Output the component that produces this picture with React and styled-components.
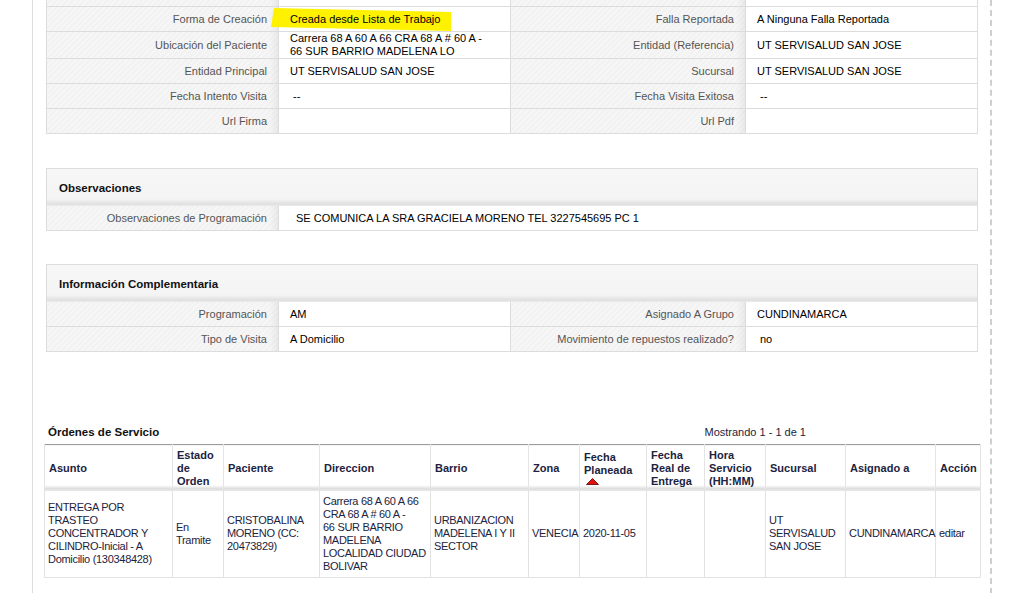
import React from 'react';
import styled, { createGlobalStyle } from 'styled-components';

const GlobalStyle = createGlobalStyle`
  html, body {
    margin: 0;
    padding: 0;
    background: #fff;
    font-family: "Liberation Sans", Arial, sans-serif;
    font-size: 11px;
  }
`;

const Page = styled.div`
  margin-left: 32px;
  width: 960px;
  min-height: 593px;
  box-sizing: border-box;
  border-left: 1px solid #dcdcdc;
  border-right: 2px dashed #cfcfcf;
  padding: 0 12px 16px 13px;
`;

const Grid = styled.div`
  display: grid;
  grid-template-columns: ${({ cols }) => cols};
  border-left: 1px solid #dcdcdc;
  border-right: 1px solid #dcdcdc;
  border-top: ${({ open }) => (open ? 'none' : '1px solid #dcdcdc')};
`;

const Label = styled.div`
  box-sizing: border-box;
  min-height: ${({ short }) => (short ? '7px' : '25px')};
  display: flex;
  align-items: center;
  justify-content: flex-end;
  padding: 0 11px;
  color: #555;
  line-height: 13px;
  border-right: 1px solid #dcdcdc;
  border-bottom: 1px solid #dcdcdc;
  background:
    linear-gradient(to right, rgba(0, 0, 0, 0) calc(100% - 9px), rgba(0, 0, 0, 0.05)),
    repeating-linear-gradient(135deg, #f6f6f6 0 2px, #f2f2f2 2px 4px);
`;

const Value = styled.div`
  position: relative;
  box-sizing: border-box;
  min-height: ${({ short }) => (short ? '7px' : '25px')};
  display: flex;
  align-items: center;
  padding: 0 11px 0 ${({ pad }) => pad || 11}px;
  color: #000;
  line-height: 13px;
  border-right: ${({ last }) => (last ? 'none' : '1px solid #dcdcdc')};
  border-bottom: 1px solid #dcdcdc;
  background: #fff;
`;

const Highlight = styled.span`
  position: absolute;
  left: -8px;
  top: 0;
  width: 180px;
  height: 25px;
  background: #fff200;
  clip-path: polygon(3px 1px, 100% 5px, 100% 24px, 0 20px);
`;

const HighText = styled.span`
  position: relative;
`;

const Panel = styled.section`
  margin-top: ${({ gap }) => gap || 34}px;
  border: 1px solid #dcdcdc;
  border-bottom: none;
`;

const PanelHeader = styled.div`
  height: 37px;
  display: flex;
  align-items: center;
  padding: 0 12px;
  font-weight: bold;
  font-size: 11.5px;
  color: #111;
  background: linear-gradient(to bottom, #f7f7f7 0, #f4f4f4 calc(100% - 7px), #e0e0e0 calc(100% - 2px), #eaeaea 100%);
`;

const PanelGrid = styled(Grid)`
  border-left: none;
  border-right: none;
  border-top: none;
`;

const OrdersHead = styled.div`
  margin-top: 68px;
  display: flex;
  align-items: center;
  height: 24px;
  padding: 0 2px;
`;

const OrdersTitle = styled.div`
  flex: 1;
  font-weight: bold;
  font-size: 11.5px;
  color: #111;
`;

const Showing = styled.div`
  color: #1c2340;
  padding-right: 170px;
`;

const Table = styled.table`
  width: 936px;
  margin: 0 -2px;
  border-collapse: collapse;
  table-layout: fixed;
  border-top: 1px solid #9c9c9c;
  color: #1c2340;
`;

const Th = styled.th`
  height: 46px;
  padding: 0 4px;
  text-align: left;
  vertical-align: middle;
  font-weight: bold;
  line-height: 13px;
  border-left: 1px solid #e4e4e4;
  border-right: 1px solid #e4e4e4;
  background: linear-gradient(to bottom, #fff 0, #fff calc(100% - 6px), #dcdcdc calc(100% - 3px), #ededed 100%);
`;

const Td = styled.td`
  height: 86px;
  box-sizing: border-box;
  padding: 3px 3px;
  vertical-align: middle;
  line-height: 13px;
  letter-spacing: -0.3px;
  border: 1px solid #e2e2e2;
  border-top: none;
`;

const SortArrow = styled.svg`
  display: block;
  margin: 1px 0 0 2px;
`;

const columns = [
  ['Asunto', 128],
  ['Estado de Orden', 51],
  ['Paciente', 96],
  ['Direccion', 111],
  ['Barrio', 98],
  ['Zona', 51],
  ['Fecha Planeada', 67, true],
  ['Fecha Real de Entrega', 58],
  ['Hora Servicio (HH:MM)', 61],
  ['Sucursal', 80],
  ['Asignado a', 90],
  ['Acción', 45],
];

// each cell as its lines, so wrapping follows the original
const row = [
  ['ENTREGA POR TRASTEO CONCENTRADOR Y CILINDRO-Inicial - A Domicilio (130348428)'],
  ['En Tramite'],
  ['CRISTOBALINA MORENO (CC: 20473829)'],
  ['Carrera 68 A 60 A 66', 'CRA 68 A # 60 A -', '66 SUR BARRIO', 'MADELENA', 'LOCALIDAD CIUDAD', 'BOLIVAR'],
  ['URBANIZACION MADELENA I Y II SECTOR'],
  ['VENECIA'],
  ['2020-11-05'],
  [],
  [],
  ['UT SERVISALUD SAN JOSE'],
  ['CUNDINAMARCA'],
  ['editar'],
];

export default function App() {
  return (
    <>
      <GlobalStyle />
      <Page>
        <Grid cols="232px 232px 235px 1fr" open>
          <Label short />
          <Value short />
          <Label short />
          <Value short last />

          <Label>Forma de Creación</Label>
          <Value>
            <Highlight />
            <HighText>Creada desde Lista de Trabajo</HighText>
          </Value>
          <Label>Falla Reportada</Label>
          <Value last>A Ninguna Falla Reportada</Value>

          <Label>Ubicación del Paciente</Label>
          <Value>
            <span>
              Carrera 68 A 60 A 66 CRA 68 A # 60 A -<br />
              66 SUR BARRIO MADELENA LO
            </span>
          </Value>
          <Label>Entidad (Referencia)</Label>
          <Value last>UT SERVISALUD SAN JOSE</Value>

          <Label>Entidad Principal</Label>
          <Value>UT SERVISALUD SAN JOSE</Value>
          <Label>Sucursal</Label>
          <Value last>UT SERVISALUD SAN JOSE</Value>

          <Label>Fecha Intento Visita</Label>
          <Value pad={14}>--</Value>
          <Label>Fecha Visita Exitosa</Label>
          <Value last pad={14}>--</Value>

          <Label>Url Firma</Label>
          <Value />
          <Label>Url Pdf</Label>
          <Value last />
        </Grid>

        <Panel gap={34}>
          <PanelHeader>Observaciones</PanelHeader>
          <PanelGrid cols="232px 1fr">
            <Label>Observaciones de Programación</Label>
            <Value last pad={17}>SE COMUNICA LA SRA GRACIELA MORENO TEL 3227545695 PC 1</Value>
          </PanelGrid>
        </Panel>

        <Panel gap={33}>
          <PanelHeader>Información Complementaria</PanelHeader>
          <PanelGrid cols="232px 232px 235px 1fr">
            <Label>Programación</Label>
            <Value>AM</Value>
            <Label>Asignado A Grupo</Label>
            <Value last>CUNDINAMARCA</Value>

            <Label>Tipo de Visita</Label>
            <Value>A Domicilio</Value>
            <Label>Movimiento de repuestos realizado?</Label>
            <Value last pad={14}>no</Value>
          </PanelGrid>
        </Panel>

        <OrdersHead>
          <OrdersTitle>Órdenes de Servicio</OrdersTitle>
          <Showing>Mostrando 1 - 1 de 1</Showing>
        </OrdersHead>

        <Table>
          <colgroup>
            {columns.map(([name, w]) => (
              <col key={name} style={{ width: w }} />
            ))}
          </colgroup>
          <thead>
            <tr>
              {columns.map(([name, , sorted]) => (
                <Th key={name}>
                  {name}
                  {sorted && (
                    <SortArrow width="13" height="7" viewBox="0 0 13 7">
                      <polygon points="6.5,0.5 12.5,6.5 0.5,6.5" fill="#e01010" stroke="#5a0000" strokeWidth="0.8" />
                    </SortArrow>
                  )}
                </Th>
              ))}
            </tr>
          </thead>
          <tbody>
            <tr>
              {row.map((lines, i) => (
                <Td key={i}>
                  {lines.map((line, j) => (
                    <React.Fragment key={j}>
                      {j > 0 && <br />}
                      {line}
                    </React.Fragment>
                  ))}
                </Td>
              ))}
            </tr>
          </tbody>
        </Table>
      </Page>
    </>
  );
}
